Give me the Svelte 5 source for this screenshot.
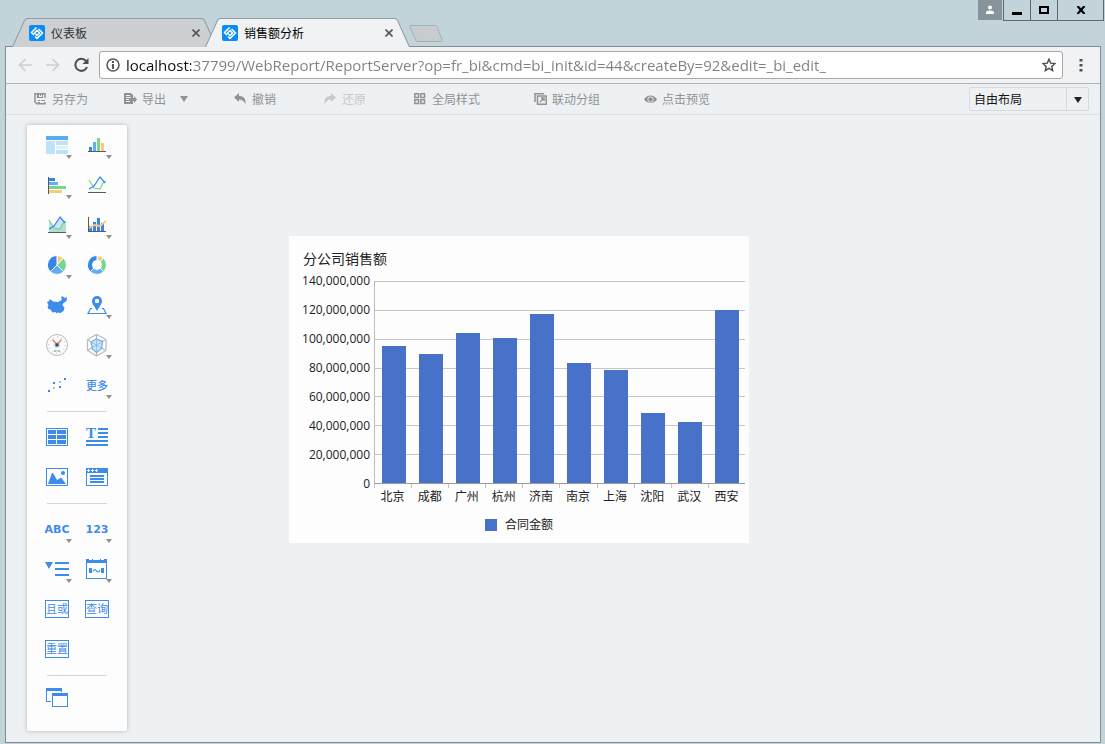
<script>
	const tabs = [
		{ title: '仪表板', active: false },
		{ title: '销售额分析', active: true }
	];

	const actions = [
		{ icon: 'save', label: '另存为', width: 90 },
		{ icon: 'export', label: '导出', width: 110, menu: true },
		{ icon: 'undo', label: '撤销', width: 90 },
		{ icon: 'redo', label: '还原', width: 90, disabled: true },
		{ icon: 'style', label: '全局样式', width: 120 },
		{ icon: 'link', label: '联动分组', width: 110 },
		{ icon: 'eye', label: '点击预览', width: 90 }
	];

	const groups = [
		[
			{ icon: 'table', label: '表格', menu: true },
			{ icon: 'column', label: '柱形图', menu: true },
			{ icon: 'bar', label: '条形图', menu: true },
			{ icon: 'line', label: '折线图' },
			{ icon: 'area', label: '面积图', menu: true },
			{ icon: 'combo', label: '组合图', menu: true },
			{ icon: 'pie', label: '饼图', menu: true },
			{ icon: 'donut', label: '圆环图' },
			{ icon: 'map', label: '地图' },
			{ icon: 'pin', label: 'GIS地图', menu: true },
			{ icon: 'gauge', label: '仪表盘' },
			{ icon: 'radar', label: '雷达图', menu: true },
			{ icon: 'scatter', label: '散点图' },
			{ text: '更多', kind: 'plain', label: '更多', menu: true }
		],
		[
			{ icon: 'detail', label: '明细表' },
			{ icon: 'text', label: '文本' },
			{ icon: 'image', label: '图片' },
			{ icon: 'web', label: '网页' }
		],
		[
			{ text: 'ABC', kind: 'latin', label: '文本控件', menu: true },
			{ text: '123', kind: 'latin', label: '数值控件', menu: true },
			{ icon: 'tree', label: '树控件', menu: true },
			{ icon: 'date', label: '日期控件', menu: true },
			{ text: '且或', kind: 'boxed', label: '且或' },
			{ text: '查询', kind: 'boxed', label: '查询' },
			{ text: '重置', kind: 'boxed', label: '重置' }
		],
		[{ icon: 'reuse', label: '复用' }]
	];

	const sales = [
		{ city: '北京', value: 95000000 },
		{ city: '成都', value: 89500000 },
		{ city: '广州', value: 104000000 },
		{ city: '杭州', value: 100500000 },
		{ city: '济南', value: 117300000 },
		{ city: '南京', value: 83200000 },
		{ city: '上海', value: 78500000 },
		{ city: '沈阳', value: 48600000 },
		{ city: '武汉', value: 42400000 },
		{ city: '西安', value: 120000000 }
	];

	const max = 140000000;
	const ticks = [7, 6, 5, 4, 3, 2, 1, 0].map((n) => n * 20000000);

	let url =
		'localhost:37799/WebReport/ReportServer?op=fr_bi&cmd=bi_init&id=44&createBy=92&edit=_bi_edit_';
	let widget = { x: 283, y: 121 };
</script>

{#snippet actionIcon(name)}
	<svg width="13" height="12" viewBox="0 0 13 12" aria-hidden="true">
		{#if name === 'save'}
			<path fill="none" stroke="currentColor" stroke-width="1.5" d="M11 5V.8H1V9l2 1.800h8V9" />
			<path fill="currentColor" d="M3 1h2v4H3zM6 1h1v2H6zM8 1h1v4H8zM3 4h6v1H3zM4 7h2v1H4zM7 7h4v1H7zM4 9h2v1H4z" />
		{:else if name === 'export'}
			<path fill="currentColor" fill-rule="evenodd" d="M0 0h7l2 2v3h1V3l3 3.5L10 10V8H9v3H0zM2 2v1h4V2zM2 4v1h5V4zM2 6v1h3V6zM2 8v1h4V8z" />
		{:else if name === 'undo'}
			<path fill="currentColor" d="M0 4.500 5 0v3c5 0 7 3 6.500 8C10 8 8 6.500 5 6.500V9z" />
		{:else if name === 'redo'}
			<path fill="currentColor" d="M12 4.500 7 0v3C2 3 0 6 .5 11 2 8 4 6.500 7 6.500V9z" />
		{:else if name === 'style'}
			<path fill="none" stroke="currentColor" stroke-width="1.500" d="M.8.8h3.700v3.700H.8zM6.800.8h3.700v3.700H6.800zM.8 6.800h3.700v3.700H.8zM6.800 6.800h3.700v3.700H6.800z" />
		{:else if name === 'link'}
			<path fill="none" stroke="currentColor" stroke-width="1.500" d="M1 9V.8h9M3.500 3h8.700v8.200H3.500zM6 9l4-4M7 5h3v3" />
		{:else}
			<path fill="currentColor" fill-rule="evenodd" d="M0 6.500C3 1.200 10 1.200 13 6.500 10 11 3 11 0 6.500zm6.500-3a3 3 0 1 0 0 6 3 3 0 0 0 0-6z" />
			<circle cx="6.500" cy="6.500" r="2.200" fill="currentColor" />
		{/if}
	</svg>
{/snippet}

{#snippet toolIcon(name)}
	<svg width="40" height="40" viewBox="0 0 40 40" aria-hidden="true">
		{#if name === 'table'}
			<path fill="#5aaceb" d="M9 11h22v4H9z" />
			<path fill="#bfe2f8" d="M9 16h9v13H9zM19 16h12v4H19zM19 25h12v4H19z" />
			<path fill="#d8f3f6" d="M19 21h12v3H19z" />
		{:else if name === 'column'}
			<path fill="#3685e8" d="M12 22h3v4h-3z" />
			<path fill="#62aef0" d="M16 17h3v9h-3z" />
			<path fill="#75d889" d="M20 13h3v13h-3z" />
			<path fill="#fac979" d="M24 18h3v8h-3z" />
			<path fill="#555b66" d="M11 26h18v1H11z" />
		{:else if name === 'bar'}
			<path fill="#3685e8" d="M12 13h6v3h-6z" />
			<path fill="#62aef0" d="M12 17h9v3h-9z" />
			<path fill="#75d889" d="M12 21h17v3H12z" />
			<path fill="#fac979" d="M12 25h13v3H12z" />
			<path fill="#555b66" d="M11 12h1v17h-1z" />
		{:else if name === 'line' || name === 'area'}
			{#if name === 'area'}
				<path fill="#cfe3fa" d="M12 24l5-3 6-9 5 6v9H12z" />
				<path fill="#a5dcc4" opacity=".8" d="M12 15l5 8 6 1 3-6 3-2v11H12z" />
			{/if}
			<path fill="none" stroke="#75d889" stroke-width="1.200" d="M12 15l5 8 6 1 3-6 3-2" />
			<path fill="none" stroke="#3685e8" stroke-width="1.200" d="M12 24l5-3 6-9 5 6" />
			<path fill="#555b66" d="M11 27h18v1H11z" />
		{:else if name === 'combo'}
			<path fill="#3685e8" d="M12 21h3v5h-3zM16 17h3v9h-3zM20 13h3v13h-3zM24 18h3v8h-3z" />
			<path fill="none" stroke="#fac979" stroke-width="1.800" d="M12 23l5-3 6 1 6-5" />
			<path fill="#555b66" d="M11 12h1v14h17v1H11z" />
		{:else if name === 'pie' || name === 'donut'}
			<g stroke="#fff" stroke-width="1">
				<path fill="#fac979" d="M20 20V10.500a9.500 9.500 0 0 1 6.500 2.600z" />
				<path fill="#75d889" d="M20 20l6.500-6.900a9.500 9.500 0 0 1 .2 13.600z" />
				<path fill="#62aef0" d="M20 20l6.700 6.700a9.500 9.500 0 0 1-13.400 0z" />
				<path fill="#3685e8" d="M20 20l-6.700 6.700A9.500 9.500 0 0 1 20 10.500z" />
			</g>
			{#if name === 'donut'}
				<circle cx="20" cy="20" r="5" fill="#fdfdfd" />
			{/if}
		{:else if name === 'map'}
			<path fill="#3d8bea" d="M10 17l2-1 1-2 3 2.500 5 .5 3-1.500 1-1.500-1-1 1-2 3 2 2-1-.5 4-3.500 2.500-.5 1.500 2 3-1 3-3 2-3-.5-1 1-1-1.500-3 .5-2-3-2-.5-1-2 1-1.500z" />
		{:else if name === 'pin'}
			<path fill="none" stroke="#3d8bea" stroke-width="1.200" d="M15 23.500h-1.500l-2.500 5h18l-2.500-5H25" />
			<path fill="#3d8bea" fill-rule="evenodd" d="M20 11a5 5 0 0 0-5 5c0 3 3 6 5 10 2-4 5-7 5-10a5 5 0 0 0-5-5zm0 2.800a2.200 2.200 0 1 1 0 4.400 2.200 2.200 0 0 1 0-4.400z" />
		{:else if name === 'gauge'}
			<circle cx="20" cy="20" r="10.500" fill="none" stroke="#b8babd" />
			<circle cx="20" cy="20" r="8" fill="none" stroke="#c4c6c9" stroke-width="2" stroke-dasharray=".7 3.500" />
			<circle cx="20" cy="20" r="3.500" fill="#cdeaf5" />
			<path fill="none" stroke="#ea7560" stroke-width="1.200" d="M15.500 14.500 20 19.500l4.500-5" />
			<circle cx="20" cy="20" r="1.800" fill="#454b55" />
			<path fill="#b8babd" d="M17 25h2v2h-2zM19.500 25h1v2h-1zM21 25h2v2h-2z" />
		{:else if name === 'radar'}
			<path fill="none" stroke="#b8babd" stroke-width="1.200" d="M19.500 9.500l9.500 5v11l-9.500 5.500-9-5.500v-11zM19.500 10v20M11 15l17 10M11 25l17-10" />
			<path fill="#bfe0fa" fill-opacity=".8" stroke="#62aef0" stroke-width="1.200" d="M19.500 14l6 2.500-1 7-5 4-4-3.500-1.500-7z" />
			<path fill="none" stroke="#8fb7d6" stroke-width=".7" d="M19.500 14v13M14.500 17l9.500 6M15 23l9.500-6" />
		{:else if name === 'scatter'}
			<path fill="#3685e8" d="M11 25h2v2h-2zM16 17h2v2h-2zM22 21h2v2h-2zM27 13h2v2h-2z" />
			<path fill="#93d4c0" d="M16 22h2v2h-2zM22 16h2v2h-2z" />
		{:else if name === 'detail'}
			<path fill="#3d8bea" fill-rule="evenodd" d="M9 11h22v18H9zM10 12v16h20V12z" />
			<path fill="#3d8bea" d="M11 13h8v4h-8zM20 13h9v4h-9zM11 18h8v4h-8zM20 18h9v4h-9zM11 23h8v4h-8zM20 23h9v4h-9z" />
		{:else if name === 'text'}
			<text class="serif" x="14" y="21" text-anchor="middle" fill="#3d8bea">T</text>
			<path fill="#3d8bea" d="M21 11h10v2H21zM21 15h10v2H21zM21 19h10v2H21zM9 23h22v2H9zM9 27h22v2H9z" />
		{:else if name === 'image'}
			<path fill="#3d8bea" fill-rule="evenodd" d="M9 11h22v18H9zM10 12v16h20V12z" />
			<path fill="#3d8bea" d="M11 27l4-11h1l4 7 2-1 2-1.500 5 6.500z" />
			<circle cx="26" cy="16" r="2" fill="#3d8bea" />
		{:else if name === 'web'}
			<path fill="#3d8bea" fill-rule="evenodd" d="M9 11h22v18H9zM10 16v12h20V16z" />
			<path fill="#3d8bea" d="M13 18h14v2H13zM13 21h14v2H13zM13 24h14v2H13z" />
			<path fill="#fff" d="M11 12h1v1h1v1h-1v1h-1v-1h-1v-1h1zM15 12h1v1h1v1h-1v1h-1v-1h-1v-1h1zM19 12h1v1h1v1h-1v1h-1v-1h-1v-1h1z" />
		{:else if name === 'tree'}
			<path fill="#3d8bea" d="M8 13h8l-4 7zM18 13h14v2H18zM18 19h14v2H18zM18 25h14v2H18z" />
		{:else if name === 'date'}
			<path fill="#3d8bea" fill-rule="evenodd" d="M9 10h3v1h3v-1h1v1h7v-1h1v1h3v-1h3v20H9zM10 14v15h19V14z" />
			<path fill="#3d8bea" d="M12 19h3v5h-3zM24 19h3v5h-3z" />
			<path fill="none" stroke="#3d8bea" stroke-width="1.200" d="M16 22.500c1.500-3 3-1.500 3.500-.5s2 2 3.500-1" />
		{:else if name === 'reuse'}
			<path fill="#3d8bea" d="M9 7h16v4h-1v-1H10v10h4v1H9z" />
			<path fill="#3d8bea" fill-rule="evenodd" d="M15 12h16v14H15zM16 15v10h14V15z" />
		{/if}
	</svg>
{/snippet}

<div class="window">
	<header class="titlebar">
		<nav class="tabs" aria-label="标签页">
			{#each tabs as tab}
				<div class="tab" class:active={tab.active}>
					<svg class="tab-shape" viewBox="0 0 206 28" preserveAspectRatio="none" aria-hidden="true">
						<path d="M.5 28 12.500 2.500Q13.500.5 15.500.5h175q2 0 3 2l12 25.500" />
					</svg>
					<svg class="favicon" width="16" height="16" viewBox="0 0 16 16" aria-hidden="true">
						<rect width="16" height="16" rx="2" fill="#0a8cf7" />
						<path fill="none" stroke="#fff" stroke-width="1.500" d="M7.500 2.500 2.500 7.500 5 10M9.500 4 13.500 8 8 13.500 6 11.500M8 5.500 10.500 8 8 10.500 5.500 8z" />
					</svg>
					<a href="#{tab.title}">{tab.title}</a>
					<button class="close" aria-label="关闭标签页">
						<svg width="8" height="8" viewBox="0 0 8 8" aria-hidden="true">
							<path stroke="#555" stroke-width="1.600" d="M.5.5l7 7M7.500.5l-7 7" />
						</svg>
					</button>
				</div>
			{/each}
			<button class="new-tab" aria-label="新标签页">
				<svg width="34" height="17" viewBox="0 0 34 17" aria-hidden="true">
					<path fill="#c9cccf" stroke="#9fb0b6" d="M2 .5h24q1.500 0 2 1l5 13q.5 2-1 2H9q-1.500 0-2-1l-6-13Q.5.5 2 .5z" />
				</svg>
			</button>
		</nav>
		<div class="controls">
			<button class="user" aria-label="用户">
				<svg width="10" height="10" viewBox="0 0 10 10" aria-hidden="true">
					<circle cx="5" cy="2.500" r="2" fill="#fff" />
					<path fill="#fff" d="M1 9V7.500q0-2 4-2t4 2V9z" />
				</svg>
			</button>
			<div class="system">
				<button aria-label="最小化">
					<svg width="12" height="10" viewBox="0 0 12 10" aria-hidden="true"><path d="M1 7h10v3H1z" /></svg>
				</button>
				<button aria-label="最大化">
					<svg width="10" height="8" viewBox="0 0 10 8" aria-hidden="true">
						<path fill="none" stroke="#000" stroke-width="2" d="M1 1h8v6H1z" />
					</svg>
				</button>
				<button class="quit" aria-label="关闭">
					<svg width="10" height="8" viewBox="0 0 10 8" aria-hidden="true">
						<path stroke="#000" stroke-width="2.200" d="M1.500 0l7 8M8.500 0l-7 8" />
					</svg>
				</button>
			</div>
		</div>
	</header>

	<div class="browser">
		<div class="address">
			<button aria-label="后退" disabled>
				<svg width="14" height="14" viewBox="0 0 14 14" aria-hidden="true">
					<path fill="none" stroke="#cfcfcf" stroke-width="1.600" d="M14 7H1.500M7.500 1l-6 6 6 6" />
				</svg>
			</button>
			<button aria-label="前进" disabled>
				<svg width="14" height="14" viewBox="0 0 14 14" aria-hidden="true">
					<path fill="none" stroke="#cfcfcf" stroke-width="1.600" d="M0 7h12.500M6.500 1l6 6-6 6" />
				</svg>
			</button>
			<button aria-label="重新加载">
				<svg width="16" height="16" viewBox="0 0 16 16" aria-hidden="true">
					<path fill="none" stroke="#4d4d4d" stroke-width="2" d="M12 4A6 6 0 1 0 13 10" />
					<path fill="#4d4d4d" d="M14.500 1v6h-6z" />
				</svg>
			</button>
			<label class="omnibox">
				<svg width="14" height="14" viewBox="0 0 14 14" role="img" aria-label="网站信息">
					<circle cx="7" cy="7" r="6" fill="none" stroke="#555" stroke-width="1.500" />
					<path fill="#555" d="M6 3h2v2H6zM6 6h2v5H6z" />
				</svg>
				<input type="text" aria-label="地址" spellcheck="false" bind:value={url} />
				<svg width="14" height="14" viewBox="0 0 14 14" role="img" aria-label="收藏">
					<path fill="none" stroke="#4d4d4d" stroke-width="1.400" d="M7 1.200l1.700 3.900 4.300.4-3.200 2.900.9 4.200L7 10.400l-3.700 2.200.9-4.200L1 5.500l4.300-.4z" />
				</svg>
			</label>
			<button class="more" aria-label="菜单">
				<svg width="4" height="14" viewBox="0 0 4 14" aria-hidden="true">
					<path fill="#505050" d="M.5 1h3v2.500h-3zM.5 6h3v2.500h-3zM.5 11h3v2.500h-3z" />
				</svg>
			</button>
		</div>

		<div class="actions">
			{#each actions as action}
				<div class="action" style="width: {action.width}px">
					<button disabled={action.disabled}>
						{@render actionIcon(action.icon)}
						{action.label}
						{#if action.menu}<i class="arrow"></i>{/if}
					</button>
				</div>
			{/each}
			<div class="layout">
				<select aria-label="布局">
					<option>自由布局</option>
				</select>
				<i class="arrow"></i>
			</div>
		</div>

		<main>
			<aside>
				{#each groups as group}
					<div class="group">
						{#each group as tool}
							<button class="tool" aria-label={tool.label}>
								{#if tool.icon}
									{@render toolIcon(tool.icon)}
								{:else}
									<span class={tool.kind}>{tool.text}</span>
								{/if}
								{#if tool.menu}<i class="caret"></i>{/if}
							</button>
						{/each}
					</div>
				{/each}
			</aside>

			<section class="widget" style="left: {widget.x}px; top: {widget.y}px">
				<h1>分公司销售额</h1>
				<div class="chart">
					<div class="y-axis">
						{#each ticks as tick}
							<span>{tick.toLocaleString('en-US')}</span>
						{/each}
					</div>
					<div class="plot">
						<div class="lines">
							{#each ticks.slice(1) as tick}
								<div></div>
							{/each}
						</div>
						<div class="bars">
							{#each sales as { value }}
								<div class="bar" style="height: {(value / max) * 100}%"></div>
							{/each}
						</div>
					</div>
					<div class="x-axis">
						{#each sales as { city }}
							<span>{city}</span>
						{/each}
					</div>
				</div>
				<div class="legend"><i></i>合同金额</div>
			</section>
		</main>
	</div>
</div>

<style>
	:global(body) {
		background: #c3d3da;
	}

	.window {
		display: flex;
		flex-direction: column;
		box-sizing: border-box;
		min-height: 100vh;
		padding: 0 4px 1px 5px;
		font-family: 'Open Sans', 'Noto Sans CJK SC', sans-serif;
		font-size: 12px;
		color: #222;
	}

	button {
		display: flex;
		align-items: center;
		justify-content: center;
		padding: 0;
		border: 0;
		background: none;
		font: inherit;
		color: inherit;
	}

	svg {
		display: block;
		flex: none;
	}

	.titlebar {
		display: flex;
		justify-content: space-between;
		height: 46px;
		margin-right: -4px;
	}

	.tabs {
		display: flex;
		align-items: flex-end;
		padding-left: 7px;
	}

	.tab {
		position: relative;
		display: flex;
		align-items: center;
		box-sizing: border-box;
		width: 205px;
		height: 29px;
		margin-right: -12px;
		margin-bottom: -1px;
		padding: 0 17px;
	}

	.active {
		z-index: 1;
	}

	.tab-shape {
		position: absolute;
		inset: 0;
		width: 100%;
		height: 100%;
		fill: #cdd0d2;
		stroke: #8d9da3;
	}

	.active .tab-shape {
		fill: #f0f2f4;
	}

	.favicon,
	.tab a,
	.close {
		position: relative;
	}

	.tab a {
		flex: 1;
		padding-left: 6px;
		color: #333;
		text-decoration: none;
	}

	.active a {
		color: #000;
	}

	.new-tab {
		margin: 0 0 4px 11px;
	}

	.controls {
		display: flex;
		align-items: flex-start;
	}

	.user {
		width: 24px;
		height: 20px;
		margin-right: 1px;
		background: #87939a;
	}

	.system {
		display: flex;
		height: 20px;
		margin-right: 1px;
		border: solid #5d686d;
		border-width: 0 1px 1px;
	}

	.system button {
		width: 27px;
		border-right: 1px solid #5d686d;
	}

	.system .quit {
		width: 45px;
		border-right: 0;
	}

	.browser {
		display: flex;
		flex: 1;
		flex-direction: column;
		border: 1px solid #7f8c91;
		background: #edf1f4;
	}

	.address {
		display: flex;
		align-items: center;
		gap: 14px;
		height: 36px;
		padding: 0 17px 0 12px;
		border-bottom: 1px solid #b0b2b4;
		background: #f0f2f4;
	}

	.omnibox {
		display: flex;
		flex: 1;
		align-items: center;
		gap: 6px;
		box-sizing: border-box;
		height: 28px;
		margin-left: -5px;
		padding: 0 6px;
		border: 1px solid #a9a6a8;
		border-radius: 3px;
		background: #fefefe;
	}

	input {
		flex: 1;
		min-width: 0;
		padding: 0;
		border: 0;
		outline: 0;
		background: linear-gradient(to right, #111 65px, #808080 65px);
		background-clip: text;
		-webkit-background-clip: text;
		color: transparent;
		font: 15px 'Open Sans', sans-serif;
	}

	.more {
		margin-left: 2px;
	}

	.actions {
		display: flex;
		align-items: center;
		height: 30px;
		padding: 0 11px 0 28px;
		border-bottom: 1px solid #dfe0e1;
	}

	.action button {
		gap: 5px;
		color: #919191;
	}

	.action button:disabled {
		color: #c8c8c8;
	}

	.arrow {
		border: 4px solid transparent;
		border-top: 6px solid currentColor;
		border-bottom: 0;
	}

	.action .arrow {
		margin-left: 9px;
	}

	.layout {
		position: relative;
		margin-left: auto;
	}

	.layout::before {
		content: '';
		position: absolute;
		top: 0;
		right: 22px;
		height: 100%;
		border-left: 1px solid #d6d9dc;
	}

	.layout .arrow {
		position: absolute;
		top: 10px;
		right: 7px;
		pointer-events: none;
	}

	select {
		appearance: none;
		display: block;
		width: 120px;
		height: 24px;
		padding: 0 28px 0 4px;
		border: 1px solid #d6d9dc;
		border-radius: 2px;
		background: none;
		font: inherit;
		color: #111;
	}

	main {
		position: relative;
		flex: 1;
		padding: 10px 21px;
	}

	aside {
		box-sizing: border-box;
		width: 100px;
		padding: 0 10px 10px;
		border-radius: 2px;
		background: #fdfdfd;
		box-shadow: 0 0 4px rgba(0, 0, 0, 0.25);
	}

	.group {
		display: grid;
		grid-template-columns: 40px 40px;
	}

	.group + .group::before {
		content: '';
		grid-column: 1 / -1;
		height: 1px;
		margin: 6px 10px 5px;
		background: #d2d4d5;
	}

	.tool {
		position: relative;
		height: 40px;
		color: #3d8bea;
	}

	.caret {
		position: absolute;
		right: 5px;
		top: 30px;
		border: 3px solid transparent;
		border-top: 4px solid #8e9092;
		border-bottom: 0;
	}

	.plain {
		font-size: 11px;
		font-weight: 500;
	}

	.latin {
		font: bold 11px 'DejaVu Sans', sans-serif;
	}

	.boxed {
		box-sizing: border-box;
		width: 24px;
		border: 1px solid #3d8bea;
		font-size: 11px;
		line-height: 16px;
	}

	.serif {
		font: bold 15px 'Liberation Serif', serif;
	}

	.widget {
		position: absolute;
		box-sizing: border-box;
		width: 460px;
		padding: 13px 4px 8px 10px;
		background: #fdfdfd;
	}

	h1 {
		margin: 0 0 12px 4px;
		font-size: 14px;
		font-weight: 400;
		line-height: 20px;
	}

	.chart {
		display: grid;
		grid-template-columns: 75px 1fr;
		grid-template-rows: 203px auto;
	}

	.y-axis {
		display: flex;
		flex-direction: column;
		justify-content: space-between;
		margin: -8px 4px -8px 0;
		line-height: 16px;
		text-align: right;
	}

	.plot {
		display: grid;
		border-left: 1px solid #bdbdbd;
		border-bottom: 1px solid #9b9b9b;
	}

	.lines,
	.bars {
		display: flex;
		grid-area: 1 / 1;
	}

	.lines {
		flex-direction: column;
	}

	.lines div {
		flex: 1;
		border-top: 1px solid #c6c7c9;
	}

	.bars {
		align-items: flex-end;
		justify-content: space-around;
	}

	.bar {
		width: 24px;
		background: #4872c9;
	}

	.x-axis {
		display: flex;
		grid-column: 2;
	}

	.x-axis span {
		flex: 1;
		padding-top: 4px;
		background: linear-gradient(#c4c4c4, #c4c4c4) 0 0 / 1px 4px no-repeat;
		line-height: 18px;
		text-align: center;
	}

	.legend {
		display: flex;
		align-items: center;
		justify-content: center;
		gap: 8px;
		margin: 9px 0 0 -6px;
		line-height: 20px;
	}

	.legend i {
		width: 12px;
		height: 12px;
		background: #4872c9;
	}
</style>
